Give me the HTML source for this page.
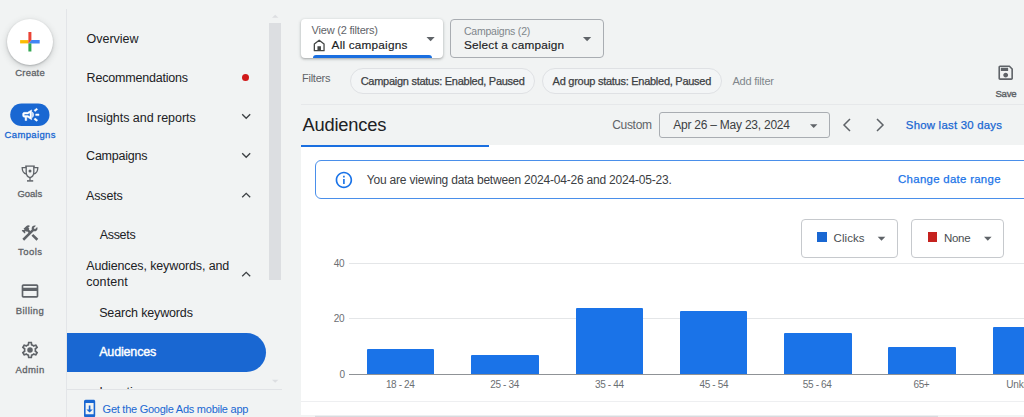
<!DOCTYPE html>
<html><head><meta charset="utf-8">
<style>
*{box-sizing:border-box;margin:0;padding:0}
html,body{width:1024px;height:417px;overflow:hidden;background:#f1f3f3;font-family:"Liberation Sans",sans-serif;color:#202124}
.a{position:absolute}
.t{position:absolute;white-space:pre;line-height:1}
svg{position:absolute;overflow:visible}
.bar{position:absolute;background:#1a73e8;border-radius:1px 1px 0 0}
</style></head><body>
<div id="root" style="position:absolute;left:0;top:0;width:1024px;height:417px;overflow:hidden">
<!-- ===== LEFT RAIL ===== -->
<div class="a" style="left:7px;top:19px;width:46px;height:46px;border-radius:50%;background:#fff;box-shadow:0 1px 2px rgba(60,64,67,.30),0 2px 6px 1px rgba(60,64,67,.15)"></div>
<svg style="left:0;top:0" width="66" height="66"><rect x="20.100" y="40.100" width="8.300" height="3.300" fill="#fbbc04"/><polygon points="31.400,40.100 39.700,40.100 39.700,43.400 28.400,43.400" fill="#4285f4"/><rect x="28.400" y="43.400" width="3" height="8.100" fill="#34a853"/><polygon points="28.400,32 31.400,32 31.400,40.100 28.400,43.400" fill="#ea4335"/></svg>

<svg style="left:0;top:0" width="66" height="140"><rect x="10.200" y="103.400" width="39.300" height="22.600" rx="11.300" fill="#1967d2"/></svg>
<svg style="left:20.700px;top:105.100px" width="19.600" height="19.600" viewBox="0 0 24 24" fill="#fff" stroke="#fff" stroke-width="0.600"><path d="M18 11c0 .67 0 1.33 0 2 1.2 0 2.76 0 4 0 0-.67 0-1.33 0-2-1.24 0-2.8 0-4 0zM16 17.610c.96.71 2.21 1.65 3.2 2.39.4-.53.8-1.070 1.200-1.600-.990-.740-2.240-1.680-3.200-2.400-.4.540-.8 1.080-1.200 1.610zM20.400 5.600C20 5.070 19.600 4.530 19.200 4c-.990.740-2.240 1.680-3.200 2.400.4.530.8 1.070 1.200 1.600.960-.720 2.210-1.650 3.200-2.400zM4 9c-1.100 0-2 .9-2 2v2c0 1.100.9 2 2 2h1v4h2v-4h1l5 3V6L8 9H4zm5.030 1.710L11 9.530v4.940l-1.970-1.180-.480-.290H4v-2h4.550l.480-.290zM15.500 12c0-1.330-.580-2.530-1.500-3.350v6.690c.920-.810 1.500-2.010 1.500-3.340z"/></svg>

<svg style="left:15px;top:160px" width="30" height="26" viewBox="0 0 30 26" fill="none" stroke="#5f6368" stroke-width="1.300"><path d="M10.200 6.100 H19.800"/><path d="M11.200 6.100 V12 C11.200 15.300 13.300 17.200 15 17.600 C16.700 17.200 18.800 15.300 18.800 12 V6.100"/><path d="M11.200 7.700 H7.200 C7.200 10.800 8.800 13.500 11.600 14.100"/><path d="M18.800 7.700 H22.800 C22.800 10.800 21.200 13.500 18.400 14.100"/><path d="M15 17.600 V20.500"/><path d="M12 20.900 H18.200" stroke-width="1.500"/><circle cx="15" cy="10.900" r="1.500" fill="#5f6368" stroke="none"/></svg>

<svg style="left:20px;top:222.700px" width="20" height="20" viewBox="0 0 24 24" fill="#5f6368"><path d="m13.783 15.172 2.121-2.121 5.996 5.996-2.121 2.121zM17.500 10c1.930 0 3.500-1.570 3.500-3.500 0-.580-.160-1.120-.410-1.600l-2.700 2.700-1.490-1.490 2.700-2.700c-.480-.250-1.020-.410-1.600-.410C15.570 3 14 4.570 14 6.500c0 .410.080.8.210 1.160l-1.850 1.850-1.780-1.780.710-.710-1.410-1.410L12 3.490c-1.170-1.170-3.070-1.170-4.240 0L4.220 7.030l1.410 1.410H2.810l-.710.710 3.540 3.540.710-.710V9.150l1.410 1.410.710-.710 1.780 1.780-7.410 7.410 2.120 2.120L16.340 9.790c.360.130.750.210 1.160.210z"/></svg>

<svg style="left:20px;top:281.400px" width="20" height="20" viewBox="0 0 24 24" fill="#5f6368"><path d="M20 4H4c-1.110 0-1.990.89-1.990 2L2 18c0 1.110.89 2 2 2h16c1.110 0 2-.89 2-2V6c0-1.110-.89-2-2-2zm0 14H4v-6h16v6zm0-10H4V6h16v2z"/></svg>

<svg style="left:20px;top:339.700px" width="20" height="20" viewBox="0 0 24 24" fill="#5f6368"><path d="M19.430 12.980c.040-.320.070-.640.070-.980 0-.340-.030-.660-.070-.980l2.110-1.650c.190-.150.240-.420.120-.640l-2-3.460c-.090-.160-.260-.250-.440-.250-.060 0-.120.010-.170.030l-2.490 1c-.520-.4-1.080-.730-1.690-.980l-.380-2.650C14.460 2.180 14.250 2 14 2h-4c-.250 0-.460.180-.490.420l-.380 2.650c-.610.250-1.170.590-1.690.980l-2.490-1c-.060-.020-.120-.030-.180-.030-.170 0-.340.090-.430.250l-2 3.460c-.130.220-.070.490.120.640l2.110 1.650c-.040.320-.070.650-.070.980 0 .330.030.660.070.980l-2.110 1.650c-.190.150-.240.420-.120.640l2 3.460c.090.160.260.250.440.250.060 0 .120-.010.170-.030l2.490-1c.520.4 1.080.730 1.690.980l.380 2.650c.030.240.240.420.490.420h4c.250 0 .460-.180.490-.420l.380-2.650c.610-.250 1.170-.590 1.690-.980l2.490 1c.060.020.120.030.180.030.170 0 .340-.090.430-.250l2-3.460c.120-.220.070-.490-.120-.640l-2.110-1.650zm-1.980-1.710c.040.310.050.520.050.730 0 .210-.020.430-.050.730l-.140 1.130.890.7 1.080.840-.7 1.210-1.270-.510-1.040-.420-.9.680c-.430.320-.840.560-1.250.730l-1.060.430-.160 1.130-.200 1.350h-1.400l-.190-1.350-.160-1.130-1.060-.430c-.430-.180-.830-.410-1.230-.710l-.910-.7-1.060.430-1.270.510-.7-1.210 1.080-.840.890-.7-.140-1.130c-.030-.310-.050-.540-.050-.740s.020-.430.050-.730l.140-1.130-.890-.7-1.080-.840.7-1.210 1.270.510 1.040.420.9-.680c.430-.320.840-.560 1.250-.730l1.060-.430.160-1.130.200-1.350h1.390l.190 1.350.160 1.130 1.060.430c.430.180.830.410 1.230.710l.910.7 1.060-.430 1.270-.510.7 1.210-1.070.850-.890.7.140 1.130z"/><circle cx="12" cy="12" r="3.300"/></svg>

<div class="a" style="left:66px;top:9px;width:1px;height:408px;background:#e3e5e8"></div>

<!-- ===== NAV PANEL ===== -->
<div class="a" style="left:242.400px;top:74.300px;width:7px;height:7px;border-radius:50%;background:#d01818"></div>
<svg style="left:241px;top:111px" width="10" height="10" viewBox="0 0 10 10" fill="none" stroke="#3c4043" stroke-width="1.300"><path d="M1.200 3.300 L5.200 7.300 L9.200 3.300"/></svg>
<svg style="left:241px;top:150.300px" width="10" height="10" viewBox="0 0 10 10" fill="none" stroke="#3c4043" stroke-width="1.300"><path d="M1.200 3.300 L5.200 7.300 L9.200 3.300"/></svg>
<svg style="left:241px;top:190px" width="10" height="10" viewBox="0 0 10 10" fill="none" stroke="#3c4043" stroke-width="1.300"><path d="M1.200 7.300 L5.200 3.300 L9.200 7.300"/></svg>
<svg style="left:241px;top:268.500px" width="10" height="10" viewBox="0 0 10 10" fill="none" stroke="#3c4043" stroke-width="1.300"><path d="M1.200 7.300 L5.200 3.300 L9.200 7.300"/></svg>

<div class="a" style="left:66.700px;top:332.500px;width:199px;height:39.200px;border-radius:0 19.600px 19.600px 0;background:#1967d2"></div>
<div class="a" style="left:67px;top:380px;width:200px;height:8.600px;overflow:hidden"><div class="t" style="left:32.500px;top:5px;line-height:14px;font-size:12.500px;color:#202124">Locations</div></div>

<!-- scrollbar -->
<div class="a" style="left:269.200px;top:23px;width:11.800px;height:257px;background:#dcdee1"></div>
<svg style="left:0;top:0" width="1024" height="417"><polygon points="272.0,17.8 278.4,17.8 275.2,14.8" fill="#dcdee1"/></svg>
<svg style="left:0;top:0" width="1024" height="417"><polygon points="272.0,379.8 278.4,379.8 275.2,382.8" fill="#dcdee1"/></svg>
<div class="a" style="left:67px;top:388.500px;width:215px;height:1px;background:#e1e3e6"></div>
<svg style="left:80px;top:399.400px" width="19.200" height="19.200" viewBox="0 0 24 24" fill="#1967d2"><path d="M17 1.010L7 1c-1.100 0-2 .9-2 2v18c0 1.100.9 2 2 2h10c1.100 0 2-.9 2-2V3c0-1.100-.9-1.990-2-1.990zM17 19H7V5h10v14zm-1-6h-3V8h-2v5H8l4 4 4-4z"/></svg>

<!-- ===== TOP BAR ===== -->
<div class="a" style="left:301.400px;top:19px;width:142px;height:39.400px;background:#fff;border-radius:4px;box-shadow:0 1px 2px rgba(60,64,67,.30),0 1px 3px 1px rgba(60,64,67,.12)"></div>
<div class="a" style="left:313px;top:55px;width:119px;height:3.400px;background:#1a6fe0;border-radius:3px 3px 0 0"></div>
<svg style="left:313.300px;top:38.700px" width="12.400" height="12.400" viewBox="0 0 12 12"><path d="M1.300 11.300 V4.900 L6 1.100 L10.700 4.900 V11.300 Z" fill="none" stroke="#444746" stroke-width="1.250" stroke-linejoin="round"/><rect x="4.300" y="7" width="3.400" height="4.300" fill="#444746"/></svg>
<svg style="left:0;top:0" width="1024" height="417"><polygon points="426.5,37.0 434.7,37.0 430.6,41.2" fill="#5f6368"/></svg>

<div class="a" style="left:450.200px;top:19.200px;width:153.600px;height:38.800px;border:1px solid #a9adb2;border-radius:4px"></div>
<svg style="left:0;top:0" width="1024" height="417"><polygon points="583.0,37.0 591.2,37.0 587.1,41.2" fill="#5f6368"/></svg>

<div class="a" style="left:350.200px;top:68px;width:185px;height:25.800px;border:1px solid #dfe1e4;border-radius:13px;background:#f3f5f6"></div>
<div class="a" style="left:542.100px;top:68px;width:180px;height:25.800px;border:1px solid #dfe1e4;border-radius:13px;background:#f3f5f6"></div>

<svg style="left:996.400px;top:63.100px" width="19.400" height="19.400" viewBox="0 0 24 24" fill="#5f6368"><path d="M17 3H5c-1.110 0-2 .9-2 2v14c0 1.100.89 2 2 2h14c1.100 0 2-.9 2-2V7l-4-4zm2 16H5V5h11.170L19 7.830V19zm-7-7c-1.660 0-3 1.340-3 3s1.340 3 3 3 3-1.340 3-3-1.340-3-3-3zM6 6h9v4H6z"/></svg>

<div class="a" style="left:301px;top:104px;width:723px;height:1px;background:#e6e8ea"></div>

<div class="a" style="left:659.100px;top:112px;width:171px;height:26.200px;border:1px solid #a9adb2;border-radius:3px"></div>
<svg style="left:0;top:0" width="1024" height="417"><polygon points="810.0,124.2 817.4,124.2 813.7,128.1" fill="#5f6368"/></svg>
<svg style="left:842px;top:118px" width="10" height="14" viewBox="0 0 10 14" fill="none" stroke="#5f6368" stroke-width="1.500"><path d="M8 1 L2 7 L8 13"/></svg>
<svg style="left:875px;top:118px" width="10" height="14" viewBox="0 0 10 14" fill="none" stroke="#5f6368" stroke-width="1.500"><path d="M2 1 L8 7 L2 13"/></svg>

<!-- ===== CARD ===== -->
<div class="a" style="left:301px;top:145px;width:723px;height:270px;background:#fff"></div>
<div class="a" style="left:301px;top:145px;width:187.500px;height:2px;background:#1a6fe0"></div>
<div class="a" style="left:314.500px;top:160px;width:740px;height:39px;border:1px solid #4a8fea;border-radius:6px;background:#fff"></div>
<svg style="left:334.200px;top:169.600px" width="19.800" height="19.800" viewBox="0 0 24 24" fill="#1a73e8"><path d="M11 7h2v2h-2zm0 4h2v6h-2zm1-9C6.480 2 2 6.480 2 12s4.480 10 10 10 10-4.480 10-10S17.520 2 12 2zm0 18c-4.410 0-8-3.590-8-8s3.590-8 8-8 8 3.590 8 8-3.590 8-8 8z"/></svg>

<div class="a" style="left:801px;top:218.800px;width:97.400px;height:39.200px;border:1px solid #c6c9cd;border-radius:4px;background:#fff"></div>
<div class="a" style="left:911.300px;top:218.800px;width:93.100px;height:39.200px;border:1px solid #c6c9cd;border-radius:4px;background:#fff"></div>
<div class="a" style="left:817px;top:232px;width:10px;height:10px;background:#1967d2"></div>
<div class="a" style="left:927.600px;top:232px;width:9.800px;height:10px;background:#c5221f"></div>
<svg style="left:0;top:0" width="1024" height="417"><polygon points="877.7,236.7 885.3,236.7 881.5,240.7" fill="#5f6368"/></svg>
<svg style="left:0;top:0" width="1024" height="417"><polygon points="984.0,236.7 991.6,236.7 987.8,240.7" fill="#5f6368"/></svg>

<div class="a" style="left:349px;top:262.800px;width:675px;height:1px;background:#e4e6e8"></div>
<div class="a" style="left:349px;top:318.400px;width:675px;height:1px;background:#e4e6e8"></div>
<div class="bar" style="left:366.700px;top:349.100px;width:67.500px;height:25px"></div>
<div class="bar" style="left:471.100px;top:354.600px;width:67.500px;height:20px"></div>
<div class="bar" style="left:575.500px;top:307.600px;width:67.500px;height:67px"></div>
<div class="bar" style="left:679.800px;top:310.800px;width:67.500px;height:63.500px"></div>
<div class="bar" style="left:784.100px;top:332.500px;width:67.500px;height:42px"></div>
<div class="bar" style="left:888.400px;top:346.700px;width:67.500px;height:27.600px"></div>
<div class="bar" style="left:992.800px;top:327px;width:67.500px;height:47px"></div>
<div class="a" style="left:348.500px;top:373.500px;width:676px;height:1.200px;background:#8f9296"></div>
<div class="a" style="left:301px;top:401px;width:723px;height:1px;background:#eeeff1"></div>
<div class="a" style="left:315px;top:416px;width:622.500px;height:1px;background:#d9dade"></div><div class="a" style="left:315px;top:415px;width:622.500px;height:1px;background:#eceef0"></div>

<!-- ===== TEXT ===== -->
<div class="t" style="left:15.3px;top:67px;line-height:11px;font-size:9.5px;color:#5f6368;letter-spacing:0.177px;-webkit-text-stroke:0.3px #5f6368;">Create</div>
<div class="t" style="left:4.6px;top:129px;line-height:11px;font-size:9.5px;color:#1967d2;letter-spacing:0.342px;-webkit-text-stroke:0.3px #1967d2;">Campaigns</div>
<div class="t" style="left:17.4px;top:188px;line-height:11px;font-size:9.5px;color:#5f6368;letter-spacing:-0.007px;-webkit-text-stroke:0.3px #5f6368;">Goals</div>
<div class="t" style="left:18.0px;top:246px;line-height:11px;font-size:9.5px;color:#5f6368;letter-spacing:0.453px;-webkit-text-stroke:0.3px #5f6368;">Tools</div>
<div class="t" style="left:15.8px;top:305px;line-height:11px;font-size:9.5px;color:#5f6368;letter-spacing:0.440px;-webkit-text-stroke:0.3px #5f6368;">Billing</div>
<div class="t" style="left:15.4px;top:364px;line-height:11px;font-size:9.5px;color:#5f6368;letter-spacing:0.466px;-webkit-text-stroke:0.3px #5f6368;">Admin</div>
<div class="t" style="left:86.6px;top:32px;line-height:14px;font-size:12.5px;color:#202124;letter-spacing:-0.028px;">Overview</div>
<div class="t" style="left:86.6px;top:71px;line-height:14px;font-size:12.5px;color:#202124;letter-spacing:-0.194px;">Recommendations</div>
<div class="t" style="left:86.6px;top:111px;line-height:14px;font-size:12.5px;color:#202124;letter-spacing:-0.031px;">Insights and reports</div>
<div class="t" style="left:86.1px;top:149px;line-height:14px;font-size:12.5px;color:#202124;letter-spacing:-0.229px;">Campaigns</div>
<div class="t" style="left:86.1px;top:189px;line-height:14px;font-size:12.5px;color:#202124;letter-spacing:-0.183px;">Assets</div>
<div class="t" style="left:99.7px;top:228px;line-height:14px;font-size:12.5px;color:#202124;letter-spacing:-0.303px;">Assets</div>
<div class="t" style="left:86.2px;top:259px;line-height:14px;font-size:12.5px;color:#202124;letter-spacing:-0.123px;">Audiences, keywords, and</div>
<div class="t" style="left:86.2px;top:275px;line-height:14px;font-size:12.5px;color:#202124;letter-spacing:0.097px;">content</div>
<div class="t" style="left:99.2px;top:306px;line-height:14px;font-size:12.5px;color:#202124;letter-spacing:-0.155px;">Search keywords</div>
<div class="t" style="left:99.2px;top:345px;line-height:14px;font-size:12.5px;color:#fff;letter-spacing:-0.159px;-webkit-text-stroke:0.4px #fff;">Audiences</div>
<div class="t" style="left:102.6px;top:403px;line-height:12px;font-size:11px;color:#1967d2;letter-spacing:-0.253px;">Get the Google Ads mobile app</div>
<div class="t" style="left:311.6px;top:24px;line-height:12px;font-size:11px;color:#5f6368;letter-spacing:-0.206px;">View (2 filters)</div>
<div class="t" style="left:331.6px;top:38px;line-height:14px;font-size:11.8px;color:#202124;letter-spacing:0.189px;-webkit-text-stroke:0.15px #202124;">All campaigns</div>
<div class="t" style="left:463.9px;top:25px;line-height:12px;font-size:10.5px;color:#80868b;letter-spacing:-0.206px;">Campaigns (2)</div>
<div class="t" style="left:463.9px;top:38px;line-height:14px;font-size:11.8px;color:#202124;letter-spacing:0.202px;-webkit-text-stroke:0.15px #202124;">Select a campaign</div>
<div class="t" style="left:302.1px;top:72px;line-height:12px;font-size:11px;color:#5f6368;letter-spacing:-0.276px;">Filters</div>
<div class="t" style="left:360.7px;top:75px;line-height:12px;font-size:11px;color:#3c4043;letter-spacing:-0.269px;-webkit-text-stroke:0.25px #3c4043;">Campaign status: Enabled, Paused</div>
<div class="t" style="left:552.6px;top:75px;line-height:12px;font-size:11px;color:#3c4043;letter-spacing:-0.266px;-webkit-text-stroke:0.25px #3c4043;">Ad group status: Enabled, Paused</div>
<div class="t" style="left:732.5px;top:75px;line-height:12px;font-size:11px;color:#80868b;letter-spacing:-0.214px;">Add filter</div>
<div class="t" style="left:995.4px;top:88px;line-height:11px;font-size:9.6px;color:#5f6368;letter-spacing:-0.225px;-webkit-text-stroke:0.4px #5f6368;">Save</div>
<div class="t" style="left:302.4px;top:114px;line-height:21px;font-size:18.3px;color:#202124;letter-spacing:-0.159px;">Audiences</div>
<div class="t" style="left:612.2px;top:118px;line-height:14px;font-size:12px;color:#5f6368;letter-spacing:-0.309px;">Custom</div>
<div class="t" style="left:673.2px;top:118px;line-height:14px;font-size:12px;color:#3c4043;letter-spacing:-0.231px;">Apr 26 – May 23, 2024</div>
<div class="t" style="left:905.8px;top:119px;line-height:12px;font-size:11.4px;color:#1967d2;letter-spacing:0.234px;-webkit-text-stroke:0.25px #1967d2;">Show last 30 days</div>
<div class="t" style="left:366.8px;top:173px;line-height:14px;font-size:12px;color:#3c4043;letter-spacing:-0.200px;">You are viewing data between 2024-04-26 and 2024-05-23.</div>
<div class="t" style="left:898.1px;top:173px;line-height:12px;font-size:11.4px;color:#1a73e8;letter-spacing:0.303px;-webkit-text-stroke:0.25px #1a73e8;">Change date range</div>
<div class="t" style="left:833.6px;top:232px;line-height:12px;font-size:11.5px;color:#4a4d51;letter-spacing:0.066px;">Clicks</div>
<div class="t" style="left:943.9px;top:232px;line-height:12px;font-size:11.5px;color:#4a4d51;letter-spacing:-0.267px;">None</div>
<div class="t" style="left:333.8px;top:258px;line-height:11px;font-size:10px;color:#6b6f73;letter-spacing:-0.325px;">40</div>
<div class="t" style="left:333.8px;top:313px;line-height:11px;font-size:10px;color:#6b6f73;letter-spacing:-0.325px;">20</div>
<div class="t" style="left:339.6px;top:369px;line-height:11px;font-size:10px;color:#6b6f73;letter-spacing:0.000px;">0</div>
<div class="t" style="left:385.9px;top:379px;line-height:11px;font-size:10px;color:#6b6f73;letter-spacing:-0.357px;">18 - 24</div>
<div class="t" style="left:490.2px;top:379px;line-height:11px;font-size:10px;color:#6b6f73;letter-spacing:-0.323px;">25 - 34</div>
<div class="t" style="left:595.0px;top:379px;line-height:11px;font-size:10px;color:#6b6f73;letter-spacing:-0.357px;">35 - 44</div>
<div class="t" style="left:699.4px;top:379px;line-height:11px;font-size:10px;color:#6b6f73;letter-spacing:-0.323px;">45 - 54</div>
<div class="t" style="left:802.8px;top:379px;line-height:11px;font-size:10px;color:#6b6f73;letter-spacing:-0.357px;">55 - 64</div>
<div class="t" style="left:913.6px;top:379px;line-height:11px;font-size:10px;color:#6b6f73;letter-spacing:-0.484px;">65+</div>
<div class="t" style="left:1006.2px;top:379px;line-height:11px;font-size:10px;color:#6b6f73;letter-spacing:-0.151px;">Unknown</div>
</div>
</body></html>
